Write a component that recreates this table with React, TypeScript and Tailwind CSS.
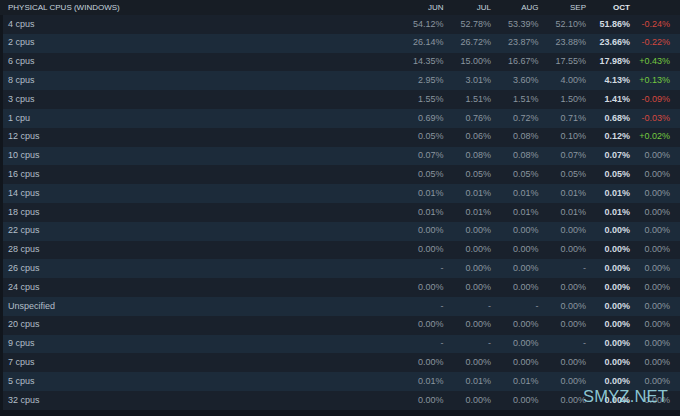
import React from "react";

type Row = {
  label: string;
  values: string[];
  oct: string;
  change: string;
};

const rows: Row[] = [
  { label: "4 cpus", values: ["54.12%", "52.78%", "53.39%", "52.10%"], oct: "51.86%", change: "-0.24%" },
  { label: "2 cpus", values: ["26.14%", "26.72%", "23.87%", "23.88%"], oct: "23.66%", change: "-0.22%" },
  { label: "6 cpus", values: ["14.35%", "15.00%", "16.67%", "17.55%"], oct: "17.98%", change: "+0.43%" },
  { label: "8 cpus", values: ["2.95%", "3.01%", "3.60%", "4.00%"], oct: "4.13%", change: "+0.13%" },
  { label: "3 cpus", values: ["1.55%", "1.51%", "1.51%", "1.50%"], oct: "1.41%", change: "-0.09%" },
  { label: "1 cpu", values: ["0.69%", "0.76%", "0.72%", "0.71%"], oct: "0.68%", change: "-0.03%" },
  { label: "12 cpus", values: ["0.05%", "0.06%", "0.08%", "0.10%"], oct: "0.12%", change: "+0.02%" },
  { label: "10 cpus", values: ["0.07%", "0.08%", "0.08%", "0.07%"], oct: "0.07%", change: "0.00%" },
  { label: "16 cpus", values: ["0.05%", "0.05%", "0.05%", "0.05%"], oct: "0.05%", change: "0.00%" },
  { label: "14 cpus", values: ["0.01%", "0.01%", "0.01%", "0.01%"], oct: "0.01%", change: "0.00%" },
  { label: "18 cpus", values: ["0.01%", "0.01%", "0.01%", "0.01%"], oct: "0.01%", change: "0.00%" },
  { label: "22 cpus", values: ["0.00%", "0.00%", "0.00%", "0.00%"], oct: "0.00%", change: "0.00%" },
  { label: "28 cpus", values: ["0.00%", "0.00%", "0.00%", "0.00%"], oct: "0.00%", change: "0.00%" },
  { label: "26 cpus", values: ["-", "0.00%", "0.00%", "-"], oct: "0.00%", change: "0.00%" },
  { label: "24 cpus", values: ["0.00%", "0.00%", "0.00%", "0.00%"], oct: "0.00%", change: "0.00%" },
  { label: "Unspecified", values: ["-", "-", "-", "0.00%"], oct: "0.00%", change: "0.00%" },
  { label: "20 cpus", values: ["0.00%", "0.00%", "0.00%", "0.00%"], oct: "0.00%", change: "0.00%" },
  { label: "9 cpus", values: ["-", "-", "0.00%", "-"], oct: "0.00%", change: "0.00%" },
  { label: "7 cpus", values: ["0.00%", "0.00%", "0.00%", "0.00%"], oct: "0.00%", change: "0.00%" },
  { label: "5 cpus", values: ["0.01%", "0.01%", "0.01%", "0.00%"], oct: "0.00%", change: "0.00%" },
  { label: "32 cpus", values: ["0.00%", "0.00%", "0.00%", "0.00%"], oct: "0.00%", change: "0.00%" },
];

const months = ["JUN", "JUL", "AUG", "SEP"];

function changeColor(change: string) {
  if (change.startsWith("-")) return "text-[#d4483f]";
  if (change.startsWith("+")) return "text-[#74c940]";
  return "text-[#8a959f]";
}

export default function App() {
  return (
    <div
      className="relative w-[680px] h-[416px] overflow-hidden bg-[#11161d]"
      style={{ fontFamily: '"Liberation Sans", Arial, sans-serif' }}
    >
      {/* header */}
      <div className="flex items-center h-[15px] bg-[#171d25] text-[8px] text-[#c6d4df]">
        <div className="flex-1 pl-[8px]">PHYSICAL CPUS (WINDOWS)</div>
        {months.map((m) => (
          <div key={m} className="w-[47.5px] text-right">{m}</div>
        ))}
        <div className="w-[44px] text-right font-bold text-[#e4e9ed]">OCT</div>
        <div className="w-[40px]" />
        <div className="w-[10px]" />
      </div>

      <div className="pl-[3px]">
        {rows.map((row, i) => (
          <div
            key={row.label}
            className={`flex items-center h-[18.8px] text-[9px] ${i % 2 === 0 ? "bg-[#19212c]" : "bg-[#1c2b3a]"}`}
          >
            <div className="flex-1 pl-[5px] text-[#b3bfc9]">{row.label}</div>
            {row.values.map((v, j) => (
              <div key={j} className="w-[47.5px] text-right text-[#8a959f]">{v}</div>
            ))}
            <div className="w-[44px] text-right font-bold text-[#d3dbe1]">{row.oct}</div>
            <div className={`w-[40px] text-right ${changeColor(row.change)}`}>{row.change}</div>
            <div className="w-[10px]" />
          </div>
        ))}
      </div>

      {/* watermark */}
      <div className="absolute left-[583px] top-[388px] text-[16.5px] leading-none text-[#9adbe6]/90 tracking-[0.2px]">
        SMYZ.NET
      </div>
    </div>
  );
}
